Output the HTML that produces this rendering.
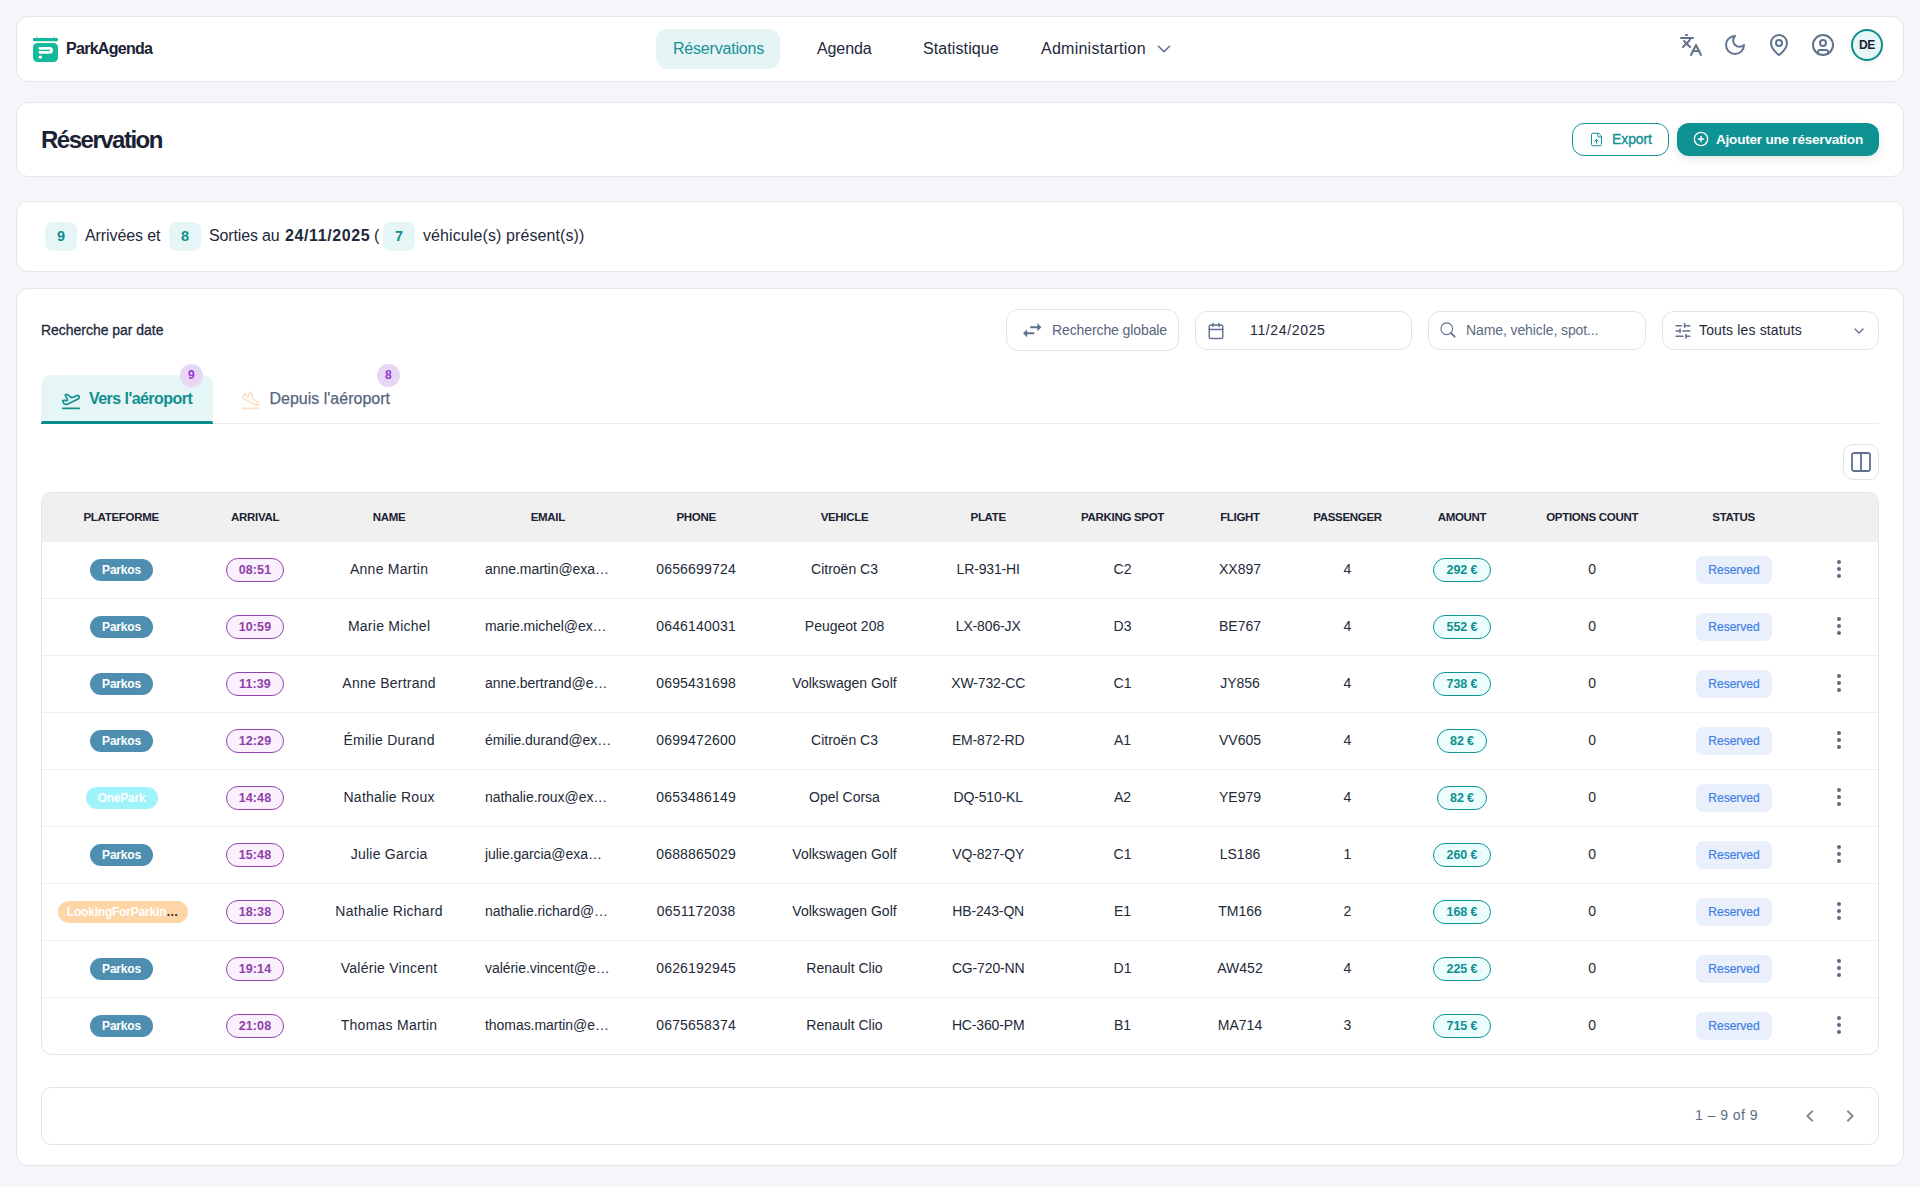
<!DOCTYPE html>
<html lang="fr"><head><meta charset="utf-8"><title>ParkAgenda - Réservation</title>
<style>
*{box-sizing:border-box;margin:0;padding:0}
html,body{width:1920px;height:1187px;overflow:hidden}
body{background:#f5f6fa;font-family:"Liberation Sans",sans-serif;position:relative;color:#1e293b}
.card{position:absolute;background:#fff;border:1px solid #e3e6ec;border-radius:12px}
.t{position:absolute;white-space:nowrap}
.abs{position:absolute}
svg.i{position:absolute;fill:none;stroke-linecap:round;stroke-linejoin:round}
.box{position:absolute;border:1px solid #e1e4ea;border-radius:12px;background:#fff}
.hdr{position:absolute;top:0;height:49px;line-height:49px}
</style></head>
<body>
<div class="card" style="left:16px;top:16px;width:1888px;height:66px"></div>
<svg class="abs" style="left:32px;top:35px" width="27" height="28" viewBox="0 0 27 28">
  <rect x="1" y="3" width="25" height="3.2" rx="1" fill="#14b89d"/>
  <rect x="4.2" y="1.6" width="1.2" height="2" fill="#14b89d" opacity=".6"/>
  <rect x="21.6" y="1.6" width="1.2" height="2" fill="#14b89d" opacity=".6"/>
  <rect x="1" y="8" width="25" height="19" rx="4.5" fill="#14b89d"/>
  <path d="M7.9 13.3H17.6a2 2 0 0 1 0 4H7.9" stroke="#fff" stroke-width="2.8" fill="none" stroke-linecap="round"/>
  <ellipse cx="8.3" cy="21.9" rx="1.85" ry="1.5" fill="#fff"/>
</svg>
<div class="t" style="left:66px;top:41px;font-size:16px;line-height:16px;font-weight:700;color:#1a2233;letter-spacing:-0.72px;">ParkAgenda</div>
<div class="abs" style="left:656px;top:29px;width:124px;height:40px;border-radius:11px;background:#e5f5f5"></div>
<div class="t" style="left:673px;top:41px;font-size:16px;line-height:16px;font-weight:400;color:#17909a;letter-spacing:-0.2px;">Réservations</div>
<div class="t" style="left:817px;top:41px;font-size:16px;line-height:16px;font-weight:400;color:#1e293b;letter-spacing:-0.1px;">Agenda</div>
<div class="t" style="left:923px;top:41px;font-size:16px;line-height:16px;font-weight:400;color:#1e293b;letter-spacing:0.1px;">Statistique</div>
<div class="t" style="left:1041px;top:41px;font-size:16px;line-height:16px;font-weight:400;color:#1e293b;letter-spacing:0.25px;">Administartion</div>
<svg class="i" style="left:1153px;top:38px" width="22" height="22" viewBox="0 0 24 24" stroke="#61728e" stroke-width="1.7"><path d="m6 9 6 6 6-6"/></svg>
<svg class="i" style="left:1679px;top:33px" width="24" height="24" viewBox="0 0 24 24" stroke="#61728e" stroke-width="2"><path d="m5 8 6 6"/><path d="m4 14 6-6 2-3"/><path d="M2 5h12"/><path d="M7 2h1"/><path d="m22 22-5-10-5 10"/><path d="M14 18h6"/></svg>
<svg class="i" style="left:1723px;top:33px" width="24" height="24" viewBox="0 0 24 24" stroke="#61728e" stroke-width="2"><path d="M12 3a6 6 0 0 0 9 9 9 9 0 1 1-9-9Z"/></svg>
<svg class="i" style="left:1767px;top:33px" width="24" height="24" viewBox="0 0 24 24" stroke="#61728e" stroke-width="2"><path d="M20 10c0 4.993-5.539 10.193-7.399 11.799a1 1 0 0 1-1.202 0C9.539 20.193 4 14.993 4 10a8 8 0 0 1 16 0"/><circle cx="12" cy="10" r="3"/></svg>
<svg class="i" style="left:1811px;top:33px" width="24" height="24" viewBox="0 0 24 24" stroke="#61728e" stroke-width="2"><circle cx="12" cy="12" r="10"/><circle cx="12" cy="10" r="3"/><path d="M7 20.662V19a2 2 0 0 1 2-2h6a2 2 0 0 1 2 2v1.662"/></svg>
<div class="abs" style="left:1851px;top:29px;width:32px;height:32px;border-radius:50%;border:2px solid #0b8f8c;background:#e6f6f6;box-shadow:0 2px 6px rgba(0,0,0,.06)"></div>
<div class="t" style="left:1847.00px;width:40px;text-align:center;top:39px;font-size:12px;line-height:12px;font-weight:700;color:#1a2233;letter-spacing:-0.3px;">DE</div>
<div class="card" style="left:16px;top:102px;width:1888px;height:75px"></div>
<div class="t" style="left:41px;top:128px;font-size:24px;line-height:24px;font-weight:700;color:#1a2233;letter-spacing:-1.5px;">Réservation</div>
<div class="abs" style="left:1572px;top:123px;width:97px;height:33px;border:1px solid #14909a;border-radius:12px;background:#fff"></div>
<svg class="i" style="left:1589px;top:132px" width="15" height="15" viewBox="0 0 24 24" stroke="#14909a" stroke-width="1.6"><path d="M15 2H6a2 2 0 0 0-2 2v16a2 2 0 0 0 2 2h12a2 2 0 0 0 2-2V7Z"/><path d="M14 2v4a2 2 0 0 0 2 2h4"/><path d="M12 12v6"/><path d="m15 15-3-3-3 3"/></svg>
<div class="t" style="left:1612px;top:132px;font-size:14px;line-height:14px;font-weight:400;color:#14909a;letter-spacing:-0.1px;-webkit-text-stroke:0.35px #14909a;">Export</div>
<div class="abs" style="left:1677px;top:123px;width:202px;height:33px;border-radius:12px;background:#0f9292;box-shadow:0 3px 8px rgba(0,0,0,.10)"></div>
<svg class="i" style="left:1693px;top:131px" width="16" height="16" viewBox="0 0 24 24" stroke="#fff" stroke-width="2"><circle cx="12" cy="12" r="10"/><path d="M8 12h8"/><path d="M12 8v8"/></svg>
<div class="t" style="left:1716px;top:133px;font-size:13.5px;line-height:13.5px;font-weight:700;color:#fff;letter-spacing:-0.2px;">Ajouter une réservation</div>
<div class="card" style="left:16px;top:201px;width:1888px;height:71px"></div>
<div class="abs" style="left:45px;top:222px;width:32px;height:29px;border-radius:8px;background:#e6f5f5"></div><div class="t" style="left:45.00px;width:32px;text-align:center;top:229px;font-size:14.5px;line-height:14.5px;font-weight:700;color:#0f8f8f;">9</div>
<div class="t" style="left:85px;top:228px;font-size:16px;line-height:16px;font-weight:400;color:#1e293b;letter-spacing:-0.1px;">Arrivées et</div>
<div class="abs" style="left:169px;top:222px;width:32px;height:29px;border-radius:8px;background:#e6f5f5"></div><div class="t" style="left:169.00px;width:32px;text-align:center;top:229px;font-size:14.5px;line-height:14.5px;font-weight:700;color:#0f8f8f;">8</div>
<div class="t" style="left:209px;top:228px;font-size:16px;line-height:16px;font-weight:400;color:#1e293b;letter-spacing:-0.15px;">Sorties au</div>
<div class="t" style="left:285px;top:228px;font-size:16px;line-height:16px;font-weight:700;color:#1e293b;letter-spacing:0.6px;">24/11/2025</div>
<div class="t" style="left:374px;top:228px;font-size:16px;line-height:16px;font-weight:400;color:#1e293b;">(</div>
<div class="abs" style="left:383px;top:222px;width:32px;height:29px;border-radius:8px;background:#e6f5f5"></div><div class="t" style="left:383.00px;width:32px;text-align:center;top:229px;font-size:14.5px;line-height:14.5px;font-weight:700;color:#0f8f8f;">7</div>
<div class="t" style="left:423px;top:228px;font-size:16px;line-height:16px;font-weight:400;color:#1e293b;letter-spacing:0.1px;">véhicule(s) présent(s))</div>
<div class="card" style="left:16px;top:288px;width:1888px;height:878px"></div>
<div class="t" style="left:41px;top:323px;font-size:14px;line-height:14px;font-weight:400;color:#1e293b;letter-spacing:-0.03px;-webkit-text-stroke:0.3px #1e293b;">Recherche par date</div>
<div class="box" style="left:1006px;top:309px;width:173px;height:42px"></div>
<svg class="abs" style="left:1019.8px;top:318px" width="24.5" height="24.5" viewBox="0 0 24 24" fill="#61728e"><path d="M6.99 11L3 15l3.99 4v-3H14v-2H6.99v-3zM21 9l-3.99-4v3H10v2h7.01v3L21 9z"/></svg>
<div class="t" style="left:1052px;top:323px;font-size:14px;line-height:14px;font-weight:400;color:#56657d;letter-spacing:-0.1px;">Recherche globale</div>
<div class="box" style="left:1195px;top:311px;width:217px;height:39px"></div>
<svg class="i" style="left:1207px;top:322px" width="18" height="18" viewBox="0 0 24 24" stroke="#61728e" stroke-width="1.9"><path d="M8 2v4"/><path d="M16 2v4"/><rect width="18" height="18" x="3" y="4" rx="2"/><path d="M3 10h18"/></svg>
<div class="t" style="left:1250px;top:323px;font-size:14px;line-height:14px;font-weight:400;color:#1e293b;letter-spacing:0.65px;">11/24/2025</div>
<div class="box" style="left:1428px;top:311px;width:218px;height:39px"></div>
<svg class="i" style="left:1438px;top:320px" width="20" height="20" viewBox="0 0 24 24" stroke="#61728e" stroke-width="1.4"><circle cx="10.5" cy="10.5" r="7"/><path d="M20 20l-4.5-4.5" stroke-width="2.2"/></svg>
<div class="t" style="left:1466px;top:323px;font-size:14px;line-height:14px;font-weight:400;color:#5b6a82;letter-spacing:-0.1px;">Name, vehicle, spot...</div>
<div class="box" style="left:1662px;top:311px;width:217px;height:39px"></div>
<svg class="abs" style="left:1668px;top:316px" width="30" height="28" viewBox="0 0 30 28" fill="#61728e"><rect x="7.5" y="8.9" width="6.4" height="1.6" rx=".5"/><rect x="15.8" y="7.1" width="1.6" height="4.7" rx=".5"/><rect x="17" y="8.9" width="5.4" height="1.6" rx=".5"/><rect x="7.5" y="14.2" width="4.4" height="1.6" rx=".5"/><rect x="11.2" y="12.7" width="1.7" height="4.3" rx=".5"/><rect x="14.2" y="14.2" width="8.2" height="1.6" rx=".5"/><rect x="7.5" y="19.5" width="8.1" height="1.6" rx=".5"/><rect x="17.2" y="17.9" width="1.7" height="4.7" rx=".5"/><rect x="18.9" y="19.5" width="3.5" height="1.6" rx=".5"/></svg>
<div class="t" style="left:1699px;top:323px;font-size:14px;line-height:14px;font-weight:400;color:#1e293b;letter-spacing:0.15px;">Touts les statuts</div>
<svg class="i" style="left:1851px;top:323px" width="16" height="16" viewBox="0 0 24 24" stroke="#61728e" stroke-width="2"><path d="m6 9 6 6 6-6"/></svg>
<div class="abs" style="left:41px;top:423px;width:1838px;height:1px;background:#ebebee"></div>
<div class="abs" style="left:41px;top:375px;width:172px;height:49px;border-radius:10px 10px 0 0;background:#e6f5f5"></div>
<div class="abs" style="left:41px;top:421px;width:172px;height:3px;border-radius:2px 2px 0 0;background:#0b8c8a"></div>
<svg class="i" style="left:61.3px;top:390px" width="20" height="20" viewBox="0 0 24 24" stroke="#0f8f8f" stroke-width="2"><path d="M2 22h20"/><path d="M6.36 17.4 4 17l-2-4 1.1-.55a2 2 0 0 1 1.8 0l.17.1a2 2 0 0 0 1.8 0L8 12 5 6l.9-.45a2 2 0 0 1 2.09.2l4.02 3a2 2 0 0 0 2.1.2l4.19-2.06a2.41 2.41 0 0 1 1.73-.17L21 7a1.4 1.4 0 0 1 .87 1.99l-.38.76c-.23.46-.6.84-1.07 1.08L7.58 17.2a2 2 0 0 1-1.22.18Z"/></svg>
<div class="t" style="left:89px;top:391px;font-size:16px;line-height:16px;font-weight:700;color:#0f8f8f;letter-spacing:-0.55px;">Vers l'aéroport</div>
<svg class="i" style="left:241.3px;top:390px" width="20" height="20" viewBox="0 0 24 24" stroke="#fde0c8" stroke-width="2"><path d="M2 22h20"/><path d="M3.77 10.77 2 9l2-4.5 1.1.55c.55.28.9.84.9 1.45s.35 1.170.9 1.45L8 8.5l3-6 1.05.53a2 2 0 0 1 1.09 1.52l.72 5.4a2 2 0 0 0 1.09 1.52l4.4 2.2c.42.22.78.55 1.01.96l.6 1.03c.49.88-.06 1.98-1.06 2.1l-1.18.15c-.47.06-.95-.02-1.37-.24L4.29 11.15a2 2 0 0 1-.52-.38Z"/></svg>
<div class="t" style="left:269.5px;top:391px;font-size:16px;line-height:16px;font-weight:400;color:#56657d;-webkit-text-stroke:0.25px #56657d;">Depuis l'aéroport</div>
<div class="abs" style="left:179.9px;top:363.9px;width:23px;height:23px;border-radius:50%;background:#e8d6f5"></div>
<div class="t" style="left:179.90px;width:23px;text-align:center;top:369px;font-size:12px;line-height:12px;font-weight:700;color:#9a35d6;">9</div>
<div class="abs" style="left:376.9px;top:363.9px;width:23px;height:23px;border-radius:50%;background:#e8d6f5"></div>
<div class="t" style="left:376.90px;width:23px;text-align:center;top:369px;font-size:12px;line-height:12px;font-weight:700;color:#9a35d6;">8</div>
<div class="box" style="left:1843px;top:444px;width:36px;height:36px;border-radius:10px"></div>
<svg class="i" style="left:1849px;top:450px" width="24" height="24" viewBox="0 0 24 24" stroke="#61728e" stroke-width="1.8"><rect width="18" height="18" x="3" y="3" rx="2"/><path d="M12 3v18"/></svg>
<div class="abs" style="left:41px;top:492px;width:1838px;height:563px;border:1px solid #e3e5ea;border-radius:10px;overflow:hidden;background:#fff">
<div class="abs" style="left:0;top:0;width:100%;height:49px;background:#f0f0f0"></div>
</div>
<div class="t" style="left:41.20px;width:160px;text-align:center;top:512px;font-size:11.5px;line-height:11.5px;font-weight:700;color:#1a2233;letter-spacing:-0.3px;">PLATEFORME</div>
<div class="t" style="left:175.10px;width:160px;text-align:center;top:512px;font-size:11.5px;line-height:11.5px;font-weight:700;color:#1a2233;letter-spacing:-0.3px;">ARRIVAL</div>
<div class="t" style="left:309.10px;width:160px;text-align:center;top:512px;font-size:11.5px;line-height:11.5px;font-weight:700;color:#1a2233;letter-spacing:-0.3px;">NAME</div>
<div class="t" style="left:467.80px;width:160px;text-align:center;top:512px;font-size:11.5px;line-height:11.5px;font-weight:700;color:#1a2233;letter-spacing:-0.3px;">EMAIL</div>
<div class="t" style="left:616.10px;width:160px;text-align:center;top:512px;font-size:11.5px;line-height:11.5px;font-weight:700;color:#1a2233;letter-spacing:-0.3px;">PHONE</div>
<div class="t" style="left:764.50px;width:160px;text-align:center;top:512px;font-size:11.5px;line-height:11.5px;font-weight:700;color:#1a2233;letter-spacing:-0.3px;">VEHICLE</div>
<div class="t" style="left:908.20px;width:160px;text-align:center;top:512px;font-size:11.5px;line-height:11.5px;font-weight:700;color:#1a2233;letter-spacing:-0.3px;">PLATE</div>
<div class="t" style="left:1042.50px;width:160px;text-align:center;top:512px;font-size:11.5px;line-height:11.5px;font-weight:700;color:#1a2233;letter-spacing:-0.3px;">PARKING SPOT</div>
<div class="t" style="left:1160.00px;width:160px;text-align:center;top:512px;font-size:11.5px;line-height:11.5px;font-weight:700;color:#1a2233;letter-spacing:-0.3px;">FLIGHT</div>
<div class="t" style="left:1267.50px;width:160px;text-align:center;top:512px;font-size:11.5px;line-height:11.5px;font-weight:700;color:#1a2233;letter-spacing:-0.3px;">PASSENGER</div>
<div class="t" style="left:1382.00px;width:160px;text-align:center;top:512px;font-size:11.5px;line-height:11.5px;font-weight:700;color:#1a2233;letter-spacing:-0.3px;">AMOUNT</div>
<div class="t" style="left:1512.20px;width:160px;text-align:center;top:512px;font-size:11.5px;line-height:11.5px;font-weight:700;color:#1a2233;letter-spacing:-0.3px;">OPTIONS COUNT</div>
<div class="t" style="left:1653.60px;width:160px;text-align:center;top:512px;font-size:11.5px;line-height:11.5px;font-weight:700;color:#1a2233;letter-spacing:-0.3px;">STATUS</div>
<div class="abs" style="left:42px;top:598px;width:1836px;height:1px;background:#efeff2"></div>
<div class="abs" style="left:90.0px;top:558.5px;width:63px;height:22px;border-radius:11px;background:#4e8fb1"></div>
<div class="t" style="left:90.00px;width:63px;text-align:center;top:564px;font-size:12px;line-height:12px;font-weight:700;color:#fff;letter-spacing:-0.2px;">Parkos</div>
<div class="abs" style="left:226px;top:557.5px;width:58px;height:24px;border-radius:12px;border:1px solid #8e44ad;background:#fbf0fd"></div>
<div class="t" style="left:226.00px;width:58px;text-align:center;top:564px;font-size:12.5px;line-height:12.5px;font-weight:700;color:#8e3fa8;letter-spacing:0.1px;">08:51</div>
<div class="t" style="left:299.10px;width:180px;text-align:center;top:562px;font-size:14px;line-height:14px;font-weight:400;color:#232a38;letter-spacing:0.25px;">Anne Martin</div>
<div class="t" style="left:485px;top:562px;font-size:14px;line-height:14px;font-weight:400;color:#232a38;letter-spacing:-0.05px;">anne.martin@exa…</div>
<div class="t" style="left:636.10px;width:120px;text-align:center;top:562px;font-size:14px;line-height:14px;font-weight:400;color:#232a38;letter-spacing:0.2px;">0656699724</div>
<div class="t" style="left:764.50px;width:160px;text-align:center;top:562px;font-size:14px;line-height:14px;font-weight:400;color:#232a38;">Citroën C3</div>
<div class="t" style="left:928.20px;width:120px;text-align:center;top:562px;font-size:14px;line-height:14px;font-weight:400;color:#232a38;letter-spacing:-0.15px;">LR-931-HI</div>
<div class="t" style="left:1092.50px;width:60px;text-align:center;top:562px;font-size:14px;line-height:14px;font-weight:400;color:#232a38;">C2</div>
<div class="t" style="left:1200.00px;width:80px;text-align:center;top:562px;font-size:14px;line-height:14px;font-weight:400;color:#232a38;">XX897</div>
<div class="t" style="left:1327.50px;width:40px;text-align:center;top:562px;font-size:14px;line-height:14px;font-weight:400;color:#232a38;">4</div>
<div class="abs" style="left:1433.0px;top:558.0px;width:58px;height:24px;border-radius:12px;border:1px solid #119494;background:#ecfdfd"></div>
<div class="t" style="left:1433.00px;width:58px;text-align:center;top:564px;font-size:12.5px;line-height:12.5px;font-weight:700;color:#0f8f8f;letter-spacing:-0.1px;">292 €</div>
<div class="t" style="left:1572.20px;width:40px;text-align:center;top:562px;font-size:14px;line-height:14px;font-weight:400;color:#232a38;">0</div>
<div class="abs" style="left:1696px;top:556.0px;width:76px;height:28px;border-radius:7px;background:#e9f0fc"></div>
<div class="t" style="left:1696.00px;width:76px;text-align:center;top:564px;font-size:12px;line-height:12px;font-weight:400;color:#3f7fe6;-webkit-text-stroke:0.2px #3f7fe6;">Reserved</div>
<div class="abs" style="left:1837px;top:560px;width:4px;height:4px;border-radius:50%;background:#5d6a80"></div>
<div class="abs" style="left:1837px;top:567px;width:4px;height:4px;border-radius:50%;background:#5d6a80"></div>
<div class="abs" style="left:1837px;top:574px;width:4px;height:4px;border-radius:50%;background:#5d6a80"></div>
<div class="abs" style="left:42px;top:655px;width:1836px;height:1px;background:#efeff2"></div>
<div class="abs" style="left:90.0px;top:615.5px;width:63px;height:22px;border-radius:11px;background:#4e8fb1"></div>
<div class="t" style="left:90.00px;width:63px;text-align:center;top:621px;font-size:12px;line-height:12px;font-weight:700;color:#fff;letter-spacing:-0.2px;">Parkos</div>
<div class="abs" style="left:226px;top:614.5px;width:58px;height:24px;border-radius:12px;border:1px solid #8e44ad;background:#fbf0fd"></div>
<div class="t" style="left:226.00px;width:58px;text-align:center;top:621px;font-size:12.5px;line-height:12.5px;font-weight:700;color:#8e3fa8;letter-spacing:0.1px;">10:59</div>
<div class="t" style="left:299.10px;width:180px;text-align:center;top:619px;font-size:14px;line-height:14px;font-weight:400;color:#232a38;letter-spacing:0.25px;">Marie Michel</div>
<div class="t" style="left:485px;top:619px;font-size:14px;line-height:14px;font-weight:400;color:#232a38;letter-spacing:-0.05px;">marie.michel@ex…</div>
<div class="t" style="left:636.10px;width:120px;text-align:center;top:619px;font-size:14px;line-height:14px;font-weight:400;color:#232a38;letter-spacing:0.2px;">0646140031</div>
<div class="t" style="left:764.50px;width:160px;text-align:center;top:619px;font-size:14px;line-height:14px;font-weight:400;color:#232a38;">Peugeot 208</div>
<div class="t" style="left:928.20px;width:120px;text-align:center;top:619px;font-size:14px;line-height:14px;font-weight:400;color:#232a38;letter-spacing:-0.15px;">LX-806-JX</div>
<div class="t" style="left:1092.50px;width:60px;text-align:center;top:619px;font-size:14px;line-height:14px;font-weight:400;color:#232a38;">D3</div>
<div class="t" style="left:1200.00px;width:80px;text-align:center;top:619px;font-size:14px;line-height:14px;font-weight:400;color:#232a38;">BE767</div>
<div class="t" style="left:1327.50px;width:40px;text-align:center;top:619px;font-size:14px;line-height:14px;font-weight:400;color:#232a38;">4</div>
<div class="abs" style="left:1433.0px;top:615.0px;width:58px;height:24px;border-radius:12px;border:1px solid #119494;background:#ecfdfd"></div>
<div class="t" style="left:1433.00px;width:58px;text-align:center;top:621px;font-size:12.5px;line-height:12.5px;font-weight:700;color:#0f8f8f;letter-spacing:-0.1px;">552 €</div>
<div class="t" style="left:1572.20px;width:40px;text-align:center;top:619px;font-size:14px;line-height:14px;font-weight:400;color:#232a38;">0</div>
<div class="abs" style="left:1696px;top:613.0px;width:76px;height:28px;border-radius:7px;background:#e9f0fc"></div>
<div class="t" style="left:1696.00px;width:76px;text-align:center;top:621px;font-size:12px;line-height:12px;font-weight:400;color:#3f7fe6;-webkit-text-stroke:0.2px #3f7fe6;">Reserved</div>
<div class="abs" style="left:1837px;top:617px;width:4px;height:4px;border-radius:50%;background:#5d6a80"></div>
<div class="abs" style="left:1837px;top:624px;width:4px;height:4px;border-radius:50%;background:#5d6a80"></div>
<div class="abs" style="left:1837px;top:631px;width:4px;height:4px;border-radius:50%;background:#5d6a80"></div>
<div class="abs" style="left:42px;top:712px;width:1836px;height:1px;background:#efeff2"></div>
<div class="abs" style="left:90.0px;top:672.5px;width:63px;height:22px;border-radius:11px;background:#4e8fb1"></div>
<div class="t" style="left:90.00px;width:63px;text-align:center;top:678px;font-size:12px;line-height:12px;font-weight:700;color:#fff;letter-spacing:-0.2px;">Parkos</div>
<div class="abs" style="left:226px;top:671.5px;width:58px;height:24px;border-radius:12px;border:1px solid #8e44ad;background:#fbf0fd"></div>
<div class="t" style="left:226.00px;width:58px;text-align:center;top:678px;font-size:12.5px;line-height:12.5px;font-weight:700;color:#8e3fa8;letter-spacing:0.1px;">11:39</div>
<div class="t" style="left:299.10px;width:180px;text-align:center;top:676px;font-size:14px;line-height:14px;font-weight:400;color:#232a38;letter-spacing:0.25px;">Anne Bertrand</div>
<div class="t" style="left:485px;top:676px;font-size:14px;line-height:14px;font-weight:400;color:#232a38;letter-spacing:-0.05px;">anne.bertrand@e…</div>
<div class="t" style="left:636.10px;width:120px;text-align:center;top:676px;font-size:14px;line-height:14px;font-weight:400;color:#232a38;letter-spacing:0.2px;">0695431698</div>
<div class="t" style="left:764.50px;width:160px;text-align:center;top:676px;font-size:14px;line-height:14px;font-weight:400;color:#232a38;">Volkswagen Golf</div>
<div class="t" style="left:928.20px;width:120px;text-align:center;top:676px;font-size:14px;line-height:14px;font-weight:400;color:#232a38;letter-spacing:-0.15px;">XW-732-CC</div>
<div class="t" style="left:1092.50px;width:60px;text-align:center;top:676px;font-size:14px;line-height:14px;font-weight:400;color:#232a38;">C1</div>
<div class="t" style="left:1200.00px;width:80px;text-align:center;top:676px;font-size:14px;line-height:14px;font-weight:400;color:#232a38;">JY856</div>
<div class="t" style="left:1327.50px;width:40px;text-align:center;top:676px;font-size:14px;line-height:14px;font-weight:400;color:#232a38;">4</div>
<div class="abs" style="left:1433.0px;top:672.0px;width:58px;height:24px;border-radius:12px;border:1px solid #119494;background:#ecfdfd"></div>
<div class="t" style="left:1433.00px;width:58px;text-align:center;top:678px;font-size:12.5px;line-height:12.5px;font-weight:700;color:#0f8f8f;letter-spacing:-0.1px;">738 €</div>
<div class="t" style="left:1572.20px;width:40px;text-align:center;top:676px;font-size:14px;line-height:14px;font-weight:400;color:#232a38;">0</div>
<div class="abs" style="left:1696px;top:670.0px;width:76px;height:28px;border-radius:7px;background:#e9f0fc"></div>
<div class="t" style="left:1696.00px;width:76px;text-align:center;top:678px;font-size:12px;line-height:12px;font-weight:400;color:#3f7fe6;-webkit-text-stroke:0.2px #3f7fe6;">Reserved</div>
<div class="abs" style="left:1837px;top:674px;width:4px;height:4px;border-radius:50%;background:#5d6a80"></div>
<div class="abs" style="left:1837px;top:681px;width:4px;height:4px;border-radius:50%;background:#5d6a80"></div>
<div class="abs" style="left:1837px;top:688px;width:4px;height:4px;border-radius:50%;background:#5d6a80"></div>
<div class="abs" style="left:42px;top:769px;width:1836px;height:1px;background:#efeff2"></div>
<div class="abs" style="left:90.0px;top:729.5px;width:63px;height:22px;border-radius:11px;background:#4e8fb1"></div>
<div class="t" style="left:90.00px;width:63px;text-align:center;top:735px;font-size:12px;line-height:12px;font-weight:700;color:#fff;letter-spacing:-0.2px;">Parkos</div>
<div class="abs" style="left:226px;top:728.5px;width:58px;height:24px;border-radius:12px;border:1px solid #8e44ad;background:#fbf0fd"></div>
<div class="t" style="left:226.00px;width:58px;text-align:center;top:735px;font-size:12.5px;line-height:12.5px;font-weight:700;color:#8e3fa8;letter-spacing:0.1px;">12:29</div>
<div class="t" style="left:299.10px;width:180px;text-align:center;top:733px;font-size:14px;line-height:14px;font-weight:400;color:#232a38;letter-spacing:0.25px;">Émilie Durand</div>
<div class="t" style="left:485px;top:733px;font-size:14px;line-height:14px;font-weight:400;color:#232a38;letter-spacing:-0.05px;">émilie.durand@ex…</div>
<div class="t" style="left:636.10px;width:120px;text-align:center;top:733px;font-size:14px;line-height:14px;font-weight:400;color:#232a38;letter-spacing:0.2px;">0699472600</div>
<div class="t" style="left:764.50px;width:160px;text-align:center;top:733px;font-size:14px;line-height:14px;font-weight:400;color:#232a38;">Citroën C3</div>
<div class="t" style="left:928.20px;width:120px;text-align:center;top:733px;font-size:14px;line-height:14px;font-weight:400;color:#232a38;letter-spacing:-0.15px;">EM-872-RD</div>
<div class="t" style="left:1092.50px;width:60px;text-align:center;top:733px;font-size:14px;line-height:14px;font-weight:400;color:#232a38;">A1</div>
<div class="t" style="left:1200.00px;width:80px;text-align:center;top:733px;font-size:14px;line-height:14px;font-weight:400;color:#232a38;">VV605</div>
<div class="t" style="left:1327.50px;width:40px;text-align:center;top:733px;font-size:14px;line-height:14px;font-weight:400;color:#232a38;">4</div>
<div class="abs" style="left:1437.0px;top:729.0px;width:50px;height:24px;border-radius:12px;border:1px solid #119494;background:#ecfdfd"></div>
<div class="t" style="left:1437.00px;width:50px;text-align:center;top:735px;font-size:12.5px;line-height:12.5px;font-weight:700;color:#0f8f8f;letter-spacing:-0.1px;">82 €</div>
<div class="t" style="left:1572.20px;width:40px;text-align:center;top:733px;font-size:14px;line-height:14px;font-weight:400;color:#232a38;">0</div>
<div class="abs" style="left:1696px;top:727.0px;width:76px;height:28px;border-radius:7px;background:#e9f0fc"></div>
<div class="t" style="left:1696.00px;width:76px;text-align:center;top:735px;font-size:12px;line-height:12px;font-weight:400;color:#3f7fe6;-webkit-text-stroke:0.2px #3f7fe6;">Reserved</div>
<div class="abs" style="left:1837px;top:731px;width:4px;height:4px;border-radius:50%;background:#5d6a80"></div>
<div class="abs" style="left:1837px;top:738px;width:4px;height:4px;border-radius:50%;background:#5d6a80"></div>
<div class="abs" style="left:1837px;top:745px;width:4px;height:4px;border-radius:50%;background:#5d6a80"></div>
<div class="abs" style="left:42px;top:826px;width:1836px;height:1px;background:#efeff2"></div>
<div class="abs" style="left:85.5px;top:786.5px;width:72px;height:22px;border-radius:11px;background:#9ff4fc"></div>
<div class="t" style="left:85.50px;width:72px;text-align:center;top:792px;font-size:12px;line-height:12px;font-weight:700;color:#fff;letter-spacing:-0.2px;">OnePark</div>
<div class="abs" style="left:226px;top:785.5px;width:58px;height:24px;border-radius:12px;border:1px solid #8e44ad;background:#fbf0fd"></div>
<div class="t" style="left:226.00px;width:58px;text-align:center;top:792px;font-size:12.5px;line-height:12.5px;font-weight:700;color:#8e3fa8;letter-spacing:0.1px;">14:48</div>
<div class="t" style="left:299.10px;width:180px;text-align:center;top:790px;font-size:14px;line-height:14px;font-weight:400;color:#232a38;letter-spacing:0.25px;">Nathalie Roux</div>
<div class="t" style="left:485px;top:790px;font-size:14px;line-height:14px;font-weight:400;color:#232a38;letter-spacing:-0.05px;">nathalie.roux@ex…</div>
<div class="t" style="left:636.10px;width:120px;text-align:center;top:790px;font-size:14px;line-height:14px;font-weight:400;color:#232a38;letter-spacing:0.2px;">0653486149</div>
<div class="t" style="left:764.50px;width:160px;text-align:center;top:790px;font-size:14px;line-height:14px;font-weight:400;color:#232a38;">Opel Corsa</div>
<div class="t" style="left:928.20px;width:120px;text-align:center;top:790px;font-size:14px;line-height:14px;font-weight:400;color:#232a38;letter-spacing:-0.15px;">DQ-510-KL</div>
<div class="t" style="left:1092.50px;width:60px;text-align:center;top:790px;font-size:14px;line-height:14px;font-weight:400;color:#232a38;">A2</div>
<div class="t" style="left:1200.00px;width:80px;text-align:center;top:790px;font-size:14px;line-height:14px;font-weight:400;color:#232a38;">YE979</div>
<div class="t" style="left:1327.50px;width:40px;text-align:center;top:790px;font-size:14px;line-height:14px;font-weight:400;color:#232a38;">4</div>
<div class="abs" style="left:1437.0px;top:786.0px;width:50px;height:24px;border-radius:12px;border:1px solid #119494;background:#ecfdfd"></div>
<div class="t" style="left:1437.00px;width:50px;text-align:center;top:792px;font-size:12.5px;line-height:12.5px;font-weight:700;color:#0f8f8f;letter-spacing:-0.1px;">82 €</div>
<div class="t" style="left:1572.20px;width:40px;text-align:center;top:790px;font-size:14px;line-height:14px;font-weight:400;color:#232a38;">0</div>
<div class="abs" style="left:1696px;top:784.0px;width:76px;height:28px;border-radius:7px;background:#e9f0fc"></div>
<div class="t" style="left:1696.00px;width:76px;text-align:center;top:792px;font-size:12px;line-height:12px;font-weight:400;color:#3f7fe6;-webkit-text-stroke:0.2px #3f7fe6;">Reserved</div>
<div class="abs" style="left:1837px;top:788px;width:4px;height:4px;border-radius:50%;background:#5d6a80"></div>
<div class="abs" style="left:1837px;top:795px;width:4px;height:4px;border-radius:50%;background:#5d6a80"></div>
<div class="abs" style="left:1837px;top:802px;width:4px;height:4px;border-radius:50%;background:#5d6a80"></div>
<div class="abs" style="left:42px;top:883px;width:1836px;height:1px;background:#efeff2"></div>
<div class="abs" style="left:90.0px;top:843.5px;width:63px;height:22px;border-radius:11px;background:#4e8fb1"></div>
<div class="t" style="left:90.00px;width:63px;text-align:center;top:849px;font-size:12px;line-height:12px;font-weight:700;color:#fff;letter-spacing:-0.2px;">Parkos</div>
<div class="abs" style="left:226px;top:842.5px;width:58px;height:24px;border-radius:12px;border:1px solid #8e44ad;background:#fbf0fd"></div>
<div class="t" style="left:226.00px;width:58px;text-align:center;top:849px;font-size:12.5px;line-height:12.5px;font-weight:700;color:#8e3fa8;letter-spacing:0.1px;">15:48</div>
<div class="t" style="left:299.10px;width:180px;text-align:center;top:847px;font-size:14px;line-height:14px;font-weight:400;color:#232a38;letter-spacing:0.25px;">Julie Garcia</div>
<div class="t" style="left:485px;top:847px;font-size:14px;line-height:14px;font-weight:400;color:#232a38;letter-spacing:-0.05px;">julie.garcia@exa…</div>
<div class="t" style="left:636.10px;width:120px;text-align:center;top:847px;font-size:14px;line-height:14px;font-weight:400;color:#232a38;letter-spacing:0.2px;">0688865029</div>
<div class="t" style="left:764.50px;width:160px;text-align:center;top:847px;font-size:14px;line-height:14px;font-weight:400;color:#232a38;">Volkswagen Golf</div>
<div class="t" style="left:928.20px;width:120px;text-align:center;top:847px;font-size:14px;line-height:14px;font-weight:400;color:#232a38;letter-spacing:-0.15px;">VQ-827-QY</div>
<div class="t" style="left:1092.50px;width:60px;text-align:center;top:847px;font-size:14px;line-height:14px;font-weight:400;color:#232a38;">C1</div>
<div class="t" style="left:1200.00px;width:80px;text-align:center;top:847px;font-size:14px;line-height:14px;font-weight:400;color:#232a38;">LS186</div>
<div class="t" style="left:1327.50px;width:40px;text-align:center;top:847px;font-size:14px;line-height:14px;font-weight:400;color:#232a38;">1</div>
<div class="abs" style="left:1433.0px;top:843.0px;width:58px;height:24px;border-radius:12px;border:1px solid #119494;background:#ecfdfd"></div>
<div class="t" style="left:1433.00px;width:58px;text-align:center;top:849px;font-size:12.5px;line-height:12.5px;font-weight:700;color:#0f8f8f;letter-spacing:-0.1px;">260 €</div>
<div class="t" style="left:1572.20px;width:40px;text-align:center;top:847px;font-size:14px;line-height:14px;font-weight:400;color:#232a38;">0</div>
<div class="abs" style="left:1696px;top:841.0px;width:76px;height:28px;border-radius:7px;background:#e9f0fc"></div>
<div class="t" style="left:1696.00px;width:76px;text-align:center;top:849px;font-size:12px;line-height:12px;font-weight:400;color:#3f7fe6;-webkit-text-stroke:0.2px #3f7fe6;">Reserved</div>
<div class="abs" style="left:1837px;top:845px;width:4px;height:4px;border-radius:50%;background:#5d6a80"></div>
<div class="abs" style="left:1837px;top:852px;width:4px;height:4px;border-radius:50%;background:#5d6a80"></div>
<div class="abs" style="left:1837px;top:859px;width:4px;height:4px;border-radius:50%;background:#5d6a80"></div>
<div class="abs" style="left:42px;top:940px;width:1836px;height:1px;background:#efeff2"></div>
<div class="abs" style="left:57.5px;top:900.5px;width:130px;height:22px;border-radius:11px;background:#fed5a6"></div>
<div class="t" style="left:57.50px;width:130px;text-align:center;top:906px;font-size:12px;line-height:12px;font-weight:700;color:#fff;letter-spacing:-0.2px;">LookingForParkin<span style="color:#1e293b">…</span></div>
<div class="abs" style="left:226px;top:899.5px;width:58px;height:24px;border-radius:12px;border:1px solid #8e44ad;background:#fbf0fd"></div>
<div class="t" style="left:226.00px;width:58px;text-align:center;top:906px;font-size:12.5px;line-height:12.5px;font-weight:700;color:#8e3fa8;letter-spacing:0.1px;">18:38</div>
<div class="t" style="left:299.10px;width:180px;text-align:center;top:904px;font-size:14px;line-height:14px;font-weight:400;color:#232a38;letter-spacing:0.25px;">Nathalie Richard</div>
<div class="t" style="left:485px;top:904px;font-size:14px;line-height:14px;font-weight:400;color:#232a38;letter-spacing:-0.05px;">nathalie.richard@…</div>
<div class="t" style="left:636.10px;width:120px;text-align:center;top:904px;font-size:14px;line-height:14px;font-weight:400;color:#232a38;letter-spacing:0.2px;">0651172038</div>
<div class="t" style="left:764.50px;width:160px;text-align:center;top:904px;font-size:14px;line-height:14px;font-weight:400;color:#232a38;">Volkswagen Golf</div>
<div class="t" style="left:928.20px;width:120px;text-align:center;top:904px;font-size:14px;line-height:14px;font-weight:400;color:#232a38;letter-spacing:-0.15px;">HB-243-QN</div>
<div class="t" style="left:1092.50px;width:60px;text-align:center;top:904px;font-size:14px;line-height:14px;font-weight:400;color:#232a38;">E1</div>
<div class="t" style="left:1200.00px;width:80px;text-align:center;top:904px;font-size:14px;line-height:14px;font-weight:400;color:#232a38;">TM166</div>
<div class="t" style="left:1327.50px;width:40px;text-align:center;top:904px;font-size:14px;line-height:14px;font-weight:400;color:#232a38;">2</div>
<div class="abs" style="left:1433.0px;top:900.0px;width:58px;height:24px;border-radius:12px;border:1px solid #119494;background:#ecfdfd"></div>
<div class="t" style="left:1433.00px;width:58px;text-align:center;top:906px;font-size:12.5px;line-height:12.5px;font-weight:700;color:#0f8f8f;letter-spacing:-0.1px;">168 €</div>
<div class="t" style="left:1572.20px;width:40px;text-align:center;top:904px;font-size:14px;line-height:14px;font-weight:400;color:#232a38;">0</div>
<div class="abs" style="left:1696px;top:898.0px;width:76px;height:28px;border-radius:7px;background:#e9f0fc"></div>
<div class="t" style="left:1696.00px;width:76px;text-align:center;top:906px;font-size:12px;line-height:12px;font-weight:400;color:#3f7fe6;-webkit-text-stroke:0.2px #3f7fe6;">Reserved</div>
<div class="abs" style="left:1837px;top:902px;width:4px;height:4px;border-radius:50%;background:#5d6a80"></div>
<div class="abs" style="left:1837px;top:909px;width:4px;height:4px;border-radius:50%;background:#5d6a80"></div>
<div class="abs" style="left:1837px;top:916px;width:4px;height:4px;border-radius:50%;background:#5d6a80"></div>
<div class="abs" style="left:42px;top:997px;width:1836px;height:1px;background:#efeff2"></div>
<div class="abs" style="left:90.0px;top:957.5px;width:63px;height:22px;border-radius:11px;background:#4e8fb1"></div>
<div class="t" style="left:90.00px;width:63px;text-align:center;top:963px;font-size:12px;line-height:12px;font-weight:700;color:#fff;letter-spacing:-0.2px;">Parkos</div>
<div class="abs" style="left:226px;top:956.5px;width:58px;height:24px;border-radius:12px;border:1px solid #8e44ad;background:#fbf0fd"></div>
<div class="t" style="left:226.00px;width:58px;text-align:center;top:963px;font-size:12.5px;line-height:12.5px;font-weight:700;color:#8e3fa8;letter-spacing:0.1px;">19:14</div>
<div class="t" style="left:299.10px;width:180px;text-align:center;top:961px;font-size:14px;line-height:14px;font-weight:400;color:#232a38;letter-spacing:0.25px;">Valérie Vincent</div>
<div class="t" style="left:485px;top:961px;font-size:14px;line-height:14px;font-weight:400;color:#232a38;letter-spacing:-0.05px;">valérie.vincent@e…</div>
<div class="t" style="left:636.10px;width:120px;text-align:center;top:961px;font-size:14px;line-height:14px;font-weight:400;color:#232a38;letter-spacing:0.2px;">0626192945</div>
<div class="t" style="left:764.50px;width:160px;text-align:center;top:961px;font-size:14px;line-height:14px;font-weight:400;color:#232a38;">Renault Clio</div>
<div class="t" style="left:928.20px;width:120px;text-align:center;top:961px;font-size:14px;line-height:14px;font-weight:400;color:#232a38;letter-spacing:-0.15px;">CG-720-NN</div>
<div class="t" style="left:1092.50px;width:60px;text-align:center;top:961px;font-size:14px;line-height:14px;font-weight:400;color:#232a38;">D1</div>
<div class="t" style="left:1200.00px;width:80px;text-align:center;top:961px;font-size:14px;line-height:14px;font-weight:400;color:#232a38;">AW452</div>
<div class="t" style="left:1327.50px;width:40px;text-align:center;top:961px;font-size:14px;line-height:14px;font-weight:400;color:#232a38;">4</div>
<div class="abs" style="left:1433.0px;top:957.0px;width:58px;height:24px;border-radius:12px;border:1px solid #119494;background:#ecfdfd"></div>
<div class="t" style="left:1433.00px;width:58px;text-align:center;top:963px;font-size:12.5px;line-height:12.5px;font-weight:700;color:#0f8f8f;letter-spacing:-0.1px;">225 €</div>
<div class="t" style="left:1572.20px;width:40px;text-align:center;top:961px;font-size:14px;line-height:14px;font-weight:400;color:#232a38;">0</div>
<div class="abs" style="left:1696px;top:955.0px;width:76px;height:28px;border-radius:7px;background:#e9f0fc"></div>
<div class="t" style="left:1696.00px;width:76px;text-align:center;top:963px;font-size:12px;line-height:12px;font-weight:400;color:#3f7fe6;-webkit-text-stroke:0.2px #3f7fe6;">Reserved</div>
<div class="abs" style="left:1837px;top:959px;width:4px;height:4px;border-radius:50%;background:#5d6a80"></div>
<div class="abs" style="left:1837px;top:966px;width:4px;height:4px;border-radius:50%;background:#5d6a80"></div>
<div class="abs" style="left:1837px;top:973px;width:4px;height:4px;border-radius:50%;background:#5d6a80"></div>
<div class="abs" style="left:90.0px;top:1014.5px;width:63px;height:22px;border-radius:11px;background:#4e8fb1"></div>
<div class="t" style="left:90.00px;width:63px;text-align:center;top:1020px;font-size:12px;line-height:12px;font-weight:700;color:#fff;letter-spacing:-0.2px;">Parkos</div>
<div class="abs" style="left:226px;top:1013.5px;width:58px;height:24px;border-radius:12px;border:1px solid #8e44ad;background:#fbf0fd"></div>
<div class="t" style="left:226.00px;width:58px;text-align:center;top:1020px;font-size:12.5px;line-height:12.5px;font-weight:700;color:#8e3fa8;letter-spacing:0.1px;">21:08</div>
<div class="t" style="left:299.10px;width:180px;text-align:center;top:1018px;font-size:14px;line-height:14px;font-weight:400;color:#232a38;letter-spacing:0.25px;">Thomas Martin</div>
<div class="t" style="left:485px;top:1018px;font-size:14px;line-height:14px;font-weight:400;color:#232a38;letter-spacing:-0.05px;">thomas.martin@e…</div>
<div class="t" style="left:636.10px;width:120px;text-align:center;top:1018px;font-size:14px;line-height:14px;font-weight:400;color:#232a38;letter-spacing:0.2px;">0675658374</div>
<div class="t" style="left:764.50px;width:160px;text-align:center;top:1018px;font-size:14px;line-height:14px;font-weight:400;color:#232a38;">Renault Clio</div>
<div class="t" style="left:928.20px;width:120px;text-align:center;top:1018px;font-size:14px;line-height:14px;font-weight:400;color:#232a38;letter-spacing:-0.15px;">HC-360-PM</div>
<div class="t" style="left:1092.50px;width:60px;text-align:center;top:1018px;font-size:14px;line-height:14px;font-weight:400;color:#232a38;">B1</div>
<div class="t" style="left:1200.00px;width:80px;text-align:center;top:1018px;font-size:14px;line-height:14px;font-weight:400;color:#232a38;">MA714</div>
<div class="t" style="left:1327.50px;width:40px;text-align:center;top:1018px;font-size:14px;line-height:14px;font-weight:400;color:#232a38;">3</div>
<div class="abs" style="left:1433.0px;top:1014.0px;width:58px;height:24px;border-radius:12px;border:1px solid #119494;background:#ecfdfd"></div>
<div class="t" style="left:1433.00px;width:58px;text-align:center;top:1020px;font-size:12.5px;line-height:12.5px;font-weight:700;color:#0f8f8f;letter-spacing:-0.1px;">715 €</div>
<div class="t" style="left:1572.20px;width:40px;text-align:center;top:1018px;font-size:14px;line-height:14px;font-weight:400;color:#232a38;">0</div>
<div class="abs" style="left:1696px;top:1012.0px;width:76px;height:28px;border-radius:7px;background:#e9f0fc"></div>
<div class="t" style="left:1696.00px;width:76px;text-align:center;top:1020px;font-size:12px;line-height:12px;font-weight:400;color:#3f7fe6;-webkit-text-stroke:0.2px #3f7fe6;">Reserved</div>
<div class="abs" style="left:1837px;top:1016px;width:4px;height:4px;border-radius:50%;background:#5d6a80"></div>
<div class="abs" style="left:1837px;top:1023px;width:4px;height:4px;border-radius:50%;background:#5d6a80"></div>
<div class="abs" style="left:1837px;top:1030px;width:4px;height:4px;border-radius:50%;background:#5d6a80"></div>
<div class="abs" style="left:41px;top:1087px;width:1838px;height:58px;border:1px solid #e3e5ea;border-radius:10px;background:#fff"></div>
<div class="t" style="left:1695px;top:1108px;font-size:14px;line-height:14px;font-weight:400;color:#5d6c84;letter-spacing:0.45px;">1 – 9 of 9</div>
<svg class="abs" style="left:1798px;top:1104px" width="24" height="24" viewBox="0 0 24 24" fill="#8c8c8c"><path d="M15.41 7.41L14 6l-6 6 6 6 1.41-1.41L10.83 12z"/></svg>
<svg class="abs" style="left:1838px;top:1104px" width="24" height="24" viewBox="0 0 24 24" fill="#8c8c8c"><path d="M10 6L8.59 7.41 13.17 12l-4.58 4.59L10 18l6-6z"/></svg>
</body></html>
